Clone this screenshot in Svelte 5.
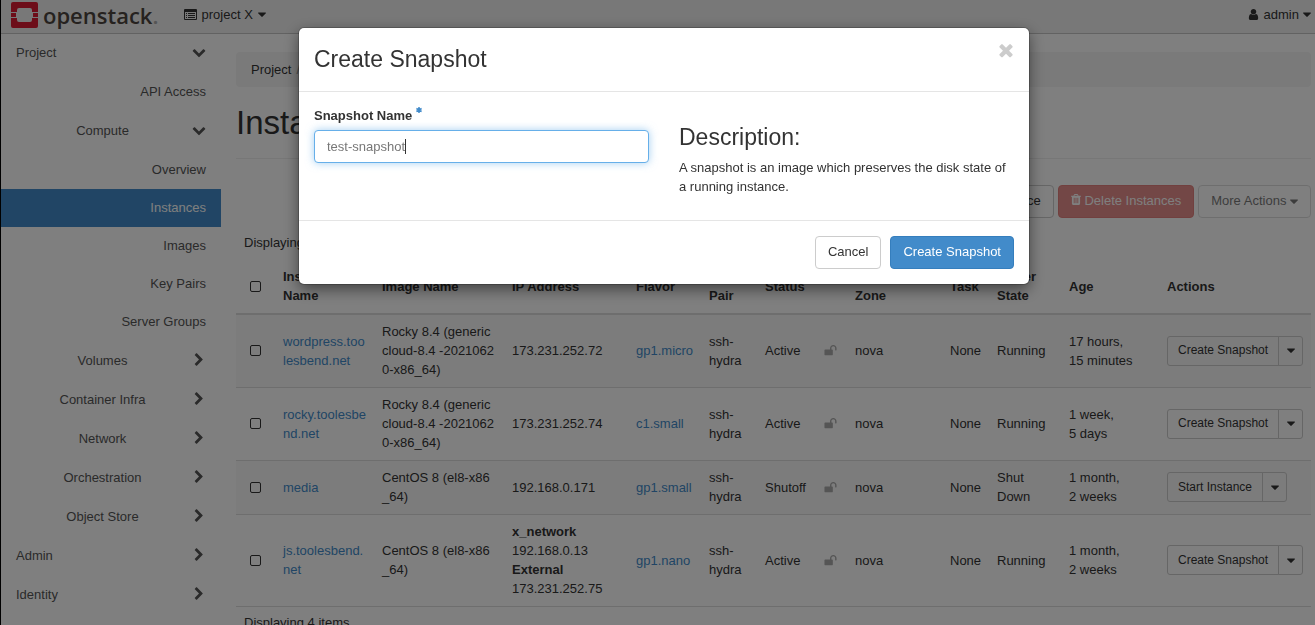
<script>
  const paths = {
    down: 'M1683 808l-742 741q-19 19-45 19t-45-19l-742-741q-19-19-19-45.5t19-45.5l166-165q19-19 45-19t45 19l531 531 531-531q19-19 45-19t45 19l166 165q19 19 19 45.5t-19 45.5z',
    right: 'M1363 877l-742 742q-19 19-45 19t-45-19l-166-166q-19-19-19-45t19-45l531-531-531-531q-19-19-19-45t19-45l166-166q19-19 45-19t45 19l742 742q19 19 19 45t-19 45z',
    times: 'M1490 1322q0 40-28 68l-136 136q-28 28-68 28t-68-28l-294-294-294 294q-28 28-68 28t-68-28l-136-136q-28-28-28-68t28-68l294-294-294-294q-28-28-28-68t28-68l136-136q28-28 68-28t68 28l294 294 294-294q28-28 68-28t68 28l136 136q28 28 28 68t-28 68l-294 294 294 294q28 28 28 68z',
    caret: 'M1408 704q0 26-19 45l-448 448q-19 19-45 19t-45-19l-448-448q-19-19-19-45t19-45 45-19h896q26 0 45 19t19 45z',
    trash: 'M704 1376v-704q0-14-9-23t-23-9h-64q-14 0-23 9t-9 23v704q0 14 9 23t23 9h64q14 0 23-9t9-23zm256 0v-704q0-14-9-23t-23-9h-64q-14 0-23 9t-9 23v704q0 14 9 23t23 9h64q14 0 23-9t9-23zm256 0v-704q0-14-9-23t-23-9h-64q-14 0-23 9t-9 23v704q0 14 9 23t23 9h64q14 0 23-9t9-23zm-544-992h448l-48-117q-7-9-17-11h-317q-10 2-17 11zm928 32v64q0 14-9 23t-23 9h-96v948q0 83-47 143.5t-113 60.5h-832q-66 0-113-58.5t-47-141.5v-952h-96q-14 0-23-9t-9-23v-64q0-14 9-23t23-9h309l70-167q15-37 54-63t79-26h320q40 0 79 26t54 63l70 167h309q14 0 23 9t9 23z',
    user: 'M1536 1399q0 109-62.5 187t-150.5 78h-854q-88 0-150.5-78t-62.5-187q0-85 8.5-160.5t31.5-152 58.5-131 94-89 134.5-34.5q131 128 313 128t313-128q76 0 134.5 34.5t94 89 58.5 131 31.5 152 8.5 160.5zm-256-887q0 159-112.5 271.5t-271.5 112.5-271.5-112.5-112.5-271.5 112.5-271.5 271.5-112.5 271.5 112.5 112.5 271.5z',
    unlock: 'M1728 576v256q0 26-19 45t-45 19h-64q-26 0-45-19t-19-45v-256q0-106-75-181t-181-75-181 75-75 181v192h96q40 0 68 28t28 68v576q0 40-28 68t-68 28h-960q-40 0-68-28t-28-68v-576q0-40 28-68t68-28h672v-192q0-185 131.5-316.5t316.5-131.5 316.5 131.5 131.5 316.5z'
  };

  const nav = [
    { label: 'Project', level: 1, open: true },
    { items: ['API Access'] },
    { label: 'Compute', level: 2, open: true },
    { items: ['Overview', 'Instances', 'Images', 'Key Pairs', 'Server Groups'] },
    { label: 'Volumes', level: 2 },
    { label: 'Container Infra', level: 2 },
    { label: 'Network', level: 2 },
    { label: 'Orchestration', level: 2 },
    { label: 'Object Store', level: 2 },
    { label: 'Admin', level: 1 },
    { label: 'Identity', level: 1 }
  ];

  const columns = [
    ['Instance Name', 99], ['Image Name', 130], ['IP Address', 124], ['Flavor', 73],
    ['Key Pair', 56], ['Status', 59], ['', 31], ['Availability Zone', 95], ['Task', 47],
    ['Power State', 72], ['Age', 98], ['Actions', 152]
  ];

  const rocky = 'Rocky 8.4 (generic cloud-8.4 -20210620-x86_64)';
  const centos = 'CentOS 8 (el8-x86_64)';
  const rows = [
    { name: 'wordpress.toolesbend.net', image: rocky, ips: ['173.231.252.72'], flavor: 'gp1.micro', status: 'Active', power: 'Running', age: ['17 hours,', '15 minutes'], action: 'Create Snapshot' },
    { name: 'rocky.toolesbend.net', image: rocky, ips: ['173.231.252.74'], flavor: 'c1.small', status: 'Active', power: 'Running', age: ['1 week,', '5 days'], action: 'Create Snapshot' },
    { name: 'media', image: centos, ips: ['192.168.0.171'], flavor: 'gp1.small', status: 'Shutoff', power: 'Shut Down', age: ['1 month,', '2 weeks'], action: 'Start Instance' },
    { name: 'js.toolesbend.net', image: centos, ips: ['*x_network', '192.168.0.13', '*External', '173.231.252.75'], flavor: 'gp1.nano', status: 'Active', power: 'Running', age: ['1 month,', '2 weeks'], action: 'Create Snapshot' }
  ];

  let snapshotName = $state('test-snapshot');
</script>

{#snippet icon(name, size)}
  <svg class="icon" viewBox="0 0 1792 1792" width={size} height={size} aria-hidden="true"><path d={paths[name]} /></svg>
{/snippet}

{#snippet caret()}
  <svg class="icon" viewBox="384 576 1024 640" width="8" height="5" aria-hidden="true"><path d={paths.caret} /></svg>
{/snippet}

<div class="page">
  <header class="topbar">
    <a class="brand" href="#home">
      <svg width="27" height="26" viewBox="0 0 27 26" aria-hidden="true">
        <path d="M2 0H25Q27 0 27 2V10H21V8Q21 6 19 6H8Q6 6 6 8V10H0V2Q0 0 2 0ZM0 11H5V15H0ZM22 11H27V15H22ZM0 16H6V18Q6 20 8 20H19Q21 20 21 18V16H27V24Q27 26 25 26H2Q0 26 0 24Z" fill="#da1a32" />
      </svg>
      <span class="wordmark">openstack<span class="dot">.</span></span>
    </a>
    <button class="menu">
      <svg class="icon" width="13" height="11" viewBox="0 0 13 11" aria-hidden="true">
        <path fill-rule="evenodd" d="M1 0H12Q13 0 13 1V10Q13 11 12 11H1Q0 11 0 10V1Q0 0 1 0ZM1 3V10H12V3ZM2 4H3V5H2ZM4 4H11V5H4ZM2 6H3V7H2ZM4 6H11V7H4ZM2 8H3V9H2ZM4 8H11V9H4Z" />
      </svg>
      <span>project X</span>
      {@render caret()}
    </button>
    <button class="menu user">
      {@render icon('user', 13)}
      <span>admin</span>
      {@render caret()}
    </button>
  </header>

  <div class="columns">
    <nav class="sidebar">
      {#each nav as entry}
        {#if entry.items}
          <ul>
            {#each entry.items as item}
              <li><a class:active={item === 'Instances'} href="#{item}">{item}</a></li>
            {/each}
          </ul>
        {:else}
          <button class="group level{entry.level}">
            <span>{entry.label}</span>
            {@render icon(entry.open ? 'down' : 'right', 14)}
          </button>
        {/if}
      {/each}
    </nav>

    <main>
      <ol class="breadcrumb">
        <li>Project</li>
      </ol>
      <h1>Instances</h1>
      <div class="toolbar">
        <button class="btn">Launch Instance</button>
        <button class="btn danger" disabled>
          <svg class="icon" viewBox="192 0 1408 1792" width="10" height="13" aria-hidden="true"><path d={paths.trash} /></svg>
          Delete Instances
        </button>
        <button class="btn" disabled>More Actions {@render caret()}</button>
      </div>
      <p class="count">Displaying 4 items</p>
      <table>
        <colgroup>
          <col style="width: 39px" />
          {#each columns as [, width]}<col style="width: {width}px" />{/each}
        </colgroup>
        <thead>
          <tr>
            <th><input type="checkbox" aria-label="Select all" /></th>
            {#each columns as [title]}<th>{title}</th>{/each}
          </tr>
        </thead>
        <tbody>
          {#each rows as row}
            <tr>
              <td><input type="checkbox" aria-label={row.name} /></td>
              <td class="break"><a href="#instance">{row.name}</a></td>
              <td class="break">{row.image}</td>
              <td>
                {#each row.ips as ip}
                  <div class:network={ip[0] === '*'}>{ip.replace('*', '')}</div>
                {/each}
              </td>
              <td><a href="#flavor">{row.flavor}</a></td>
              <td>ssh-hydra</td>
              <td>{row.status}</td>
              <td class="lock">{@render icon('unlock', 13)}</td>
              <td>nova</td>
              <td>None</td>
              <td>{row.power}</td>
              <td>{#each row.age as part}<div>{part}</div>{/each}</td>
              <td>
                <div class="split">
                  <button>{row.action}</button>
                  <button class="toggle" aria-label="More actions">{@render caret()}</button>
                </div>
              </td>
            </tr>
          {/each}
        </tbody>
      </table>
      <p class="count">Displaying 4 items</p>
    </main>
  </div>
</div>

<div class="backdrop">
  <div class="modal" role="dialog" aria-labelledby="dialog-title">
    <div class="modal-header">
      <h2 id="dialog-title">Create Snapshot</h2>
      <button class="close" aria-label="Close">{@render icon('times', 20)}</button>
    </div>
    <div class="modal-body">
      <div class="field">
        <label for="snapshot-name">
          Snapshot Name
          <svg class="required" width="6" height="6" viewBox="0 0 6 6" aria-hidden="true">
            <path d="M3 0V6M0.4 1.5L5.6 4.5M5.6 1.5L0.4 4.5" />
          </svg>
        </label>
        <input id="snapshot-name" type="text" bind:value={snapshotName} />
      </div>
      <div class="description">
        <h3>Description:</h3>
        <p>A snapshot is an image which preserves the disk state of a running instance.</p>
      </div>
    </div>
    <div class="modal-footer">
      <button class="btn">Cancel</button>
      <button class="btn primary">Create Snapshot</button>
    </div>
  </div>
</div>

<style>
  :global(body) {
    margin: 0;
    overflow: hidden;
    background: #fff;
    color: #333;
    font: 13px/19px "Liberation Sans", Arial, sans-serif;
  }
  :global(*) { box-sizing: border-box; }

  button, input { font: inherit; color: inherit; }
  button { margin: 0; }
  a { color: #428bca; text-decoration: none; }
  .icon { display: inline-block; flex: none; fill: currentColor; }

  .page { border-left: 1px solid #000; height: 100vh; overflow: hidden; }

  .topbar {
    display: flex;
    align-items: center;
    height: 34px;
    padding: 0 4px 4px 10px;
    background: #f1f1f1;
    border-bottom: 1px solid #c4c4c4;
  }
  .brand { display: flex; align-items: center; color: #4d453f; }
  .wordmark {
    margin-left: 5px;
    font: 600 22px/26px "Open Sans", sans-serif;
  }
  .dot { color: #aaa; }
  .menu {
    display: flex;
    align-items: center;
    gap: 5px;
    margin-left: 25px;
    padding: 0;
    border: 0;
    background: none;
  }
  .user { margin-left: auto; gap: 4px; }

  .columns { display: flex; }
  .sidebar { flex: 0 0 220px; }
  .sidebar ul { margin: 0 0 1px; padding: 0; list-style: none; }
  .sidebar li a {
    display: block;
    padding: 0 15px;
    line-height: 38px;
    color: #555;
    text-align: right;
  }
  .sidebar li a.active { background: #428bca; color: #fff; }
  .group {
    display: flex;
    align-items: center;
    width: 100%;
    height: 38px;
    margin-bottom: 1px;
    padding: 0 15px 2px;
    border: 0;
    background: none;
    color: #555;
    text-align: left;
  }
  .group span { flex: 1; }
  .level2 span { padding-right: 3px; text-align: center; }

  main { flex: 1; min-width: 0; padding: 18px 4px 0 15px; }
  .breadcrumb {
    display: flex;
    margin: 0;
    padding: 8px 15px;
    border-radius: 4px;
    background: #f5f5f5;
    list-style: none;
  }
  .breadcrumb li::after { content: "/"; padding: 0 5px; color: #999; }
  h1, h2, h3 { margin: 0; font-weight: 400; }
  h1 {
    padding: 18px 0 17px;
    border-bottom: 1px solid #eee;
    font-size: 33px;
    line-height: 36px;
  }
  .toolbar {
    display: flex;
    justify-content: flex-end;
    gap: 4px;
    margin: 26px 0 15px;
  }
  .btn {
    height: 33px;
    padding: 0 12px 2px;
    border: 1px solid #ccc;
    border-radius: 4px;
    background: #fff;
  }
  .btn .icon { vertical-align: middle; }
  .btn:disabled { opacity: 0.65; }
  .btn.danger { background: #d9534f; border-color: #d43f3a; color: #fff; }
  .btn.danger .icon { vertical-align: -1px; }
  .btn.primary { background: #428bca; border-color: #357ebd; color: #fff; }
  .count { margin: 0; padding: 0 8px; }

  table { width: 100%; table-layout: fixed; border-collapse: separate; border-spacing: 0; }
  .count + table { margin-top: 8px; }
  th, td { padding: 7px 8px 8px; text-align: left; }
  th { border-bottom: 2px solid #ddd; }
  td { border-bottom: 1px solid #ddd; }
  tbody tr:nth-child(odd) { background: #f9f9f9; }
  th:first-child, td:first-child { padding-left: 14px; }
  .break { word-break: break-all; }
  .network { font-weight: 700; }
  .lock { color: #aaa; }
  .lock .icon { display: block; }
  input[type="checkbox"] {
    display: block;
    width: 11px;
    height: 11px;
    margin: 0;
    border: 1px solid #333;
    border-radius: 2px;
    appearance: none;
  }
  .split { display: flex; }
  .split button {
    height: 30px;
    padding: 0 10px;
    border: 1px solid #ccc;
    border-radius: 3px 0 0 3px;
    background: transparent;
    font-size: 12px;
    white-space: nowrap;
  }
  .split .toggle {
    display: flex;
    align-items: center;
    justify-content: center;
    width: 25px;
    margin-left: -1px;
    padding: 0;
    border-radius: 0 3px 3px 0;
  }
  table + .count { padding-top: 6px; }

  .backdrop {
    position: fixed;
    inset: 0;
    display: flex;
    align-items: flex-start;
    justify-content: center;
    padding: 28px 0 0 13px;
    background: rgba(0, 0, 0, 0.5);
  }
  .modal {
    width: 730px;
    border-radius: 5px;
    background: #fff;
    box-shadow: 0 0 0 1px rgba(0, 0, 0, 0.2), 0 5px 15px rgba(0, 0, 0, 0.5);
  }
  .modal-header {
    display: flex;
    justify-content: space-between;
    align-items: flex-start;
    padding: 15px 13px 16px 15px;
    border-bottom: 1px solid #e5e5e5;
  }
  h2 { font-size: 23px; line-height: 32px; }
  .close { padding: 0; border: 0; background: none; color: #ccc; }
  .close .icon { display: block; margin-top: -3px; }
  .modal-body { display: flex; gap: 30px; padding: 15px; }
  .field, .description { flex: 1; }
  label { display: block; font-weight: 700; line-height: 18px; margin-bottom: 5px; }
  .required { margin-bottom: 7px; stroke: #428bca; stroke-width: 1.5; }
  input[type="text"] {
    display: block;
    width: 100%;
    height: 33px;
    padding: 0 12px;
    border: 1px solid #66afe9;
    border-radius: 4px;
    outline: 0;
    background: linear-gradient(#333, #333) 90px 8px / 1px 15px no-repeat #fff;
    box-shadow: 0 0 8px rgba(102, 175, 233, 0.6);
    color: #777;
  }
  .description { padding-top: 18px; }
  h3 { font-size: 23px; line-height: 25px; }
  .description p { margin: 8px 0 9px; }
  .modal-footer {
    display: flex;
    justify-content: flex-end;
    gap: 9px;
    padding: 15px;
    border-top: 1px solid #e5e5e5;
  }
</style>
